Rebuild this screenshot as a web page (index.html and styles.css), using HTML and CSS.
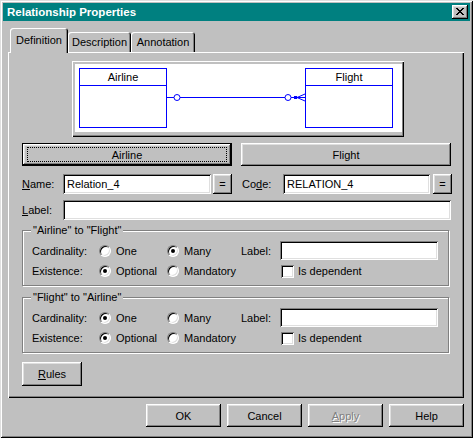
FILE: index.html
```html
<!DOCTYPE html>
<html>
<head>
<meta charset="utf-8">
<title>Relationship Properties</title>
<link rel="stylesheet" href="styles.css">
</head>
<body>
<div class="window">
  <div class="titlebar">
    <span class="title">Relationship Properties</span>
    <span class="close"><svg width="16" height="14" viewBox="0 0 16 14"><path fill="#000" d="M4 3h2v1h-2zM10 3h2v1h-2zM5 4h2v1h-2zM9 4h2v1h-2zM6 5h4v1h-4zM7 6h2v1h-2zM6 7h4v1h-4zM5 8h2v1h-2zM9 8h2v1h-2zM4 9h2v1h-2zM10 9h2v1h-2z"/></svg></span>
  </div>
  <div class="body">
    <div class="tabs">
      <div class="tab active">Definition</div>
      <div class="tab t-desc">Description</div>
      <div class="tab t-ann">Annotation</div>
    </div>
    <div class="panel">
      <div class="diagram">
        <svg class="canvas" width="327" height="68" viewBox="0 0 327 68">
          <g fill="none" stroke="#0000ff" stroke-width="1">
            <rect x="4.5" y="4.5" width="87" height="59" fill="#fff"/>
            <line x1="4.5" y1="21.5" x2="91.5" y2="21.5"/>
            <rect x="230.5" y="4.5" width="87" height="59" fill="#fff"/>
            <line x1="230.5" y1="21.5" x2="317.5" y2="21.5"/>
            <line x1="92" y1="33.5" x2="99" y2="33.5"/>
            <circle cx="102" cy="33.5" r="3" fill="#fff"/>
            <line x1="105" y1="33.5" x2="210" y2="33.5"/>
            <circle cx="213" cy="33.5" r="3" fill="#fff"/>
            <line x1="216" y1="33.5" x2="230" y2="33.5"/>
            <line x1="222" y1="33.5" x2="230" y2="30"/>
            <line x1="222" y1="33.5" x2="230" y2="37"/>
          </g>
          <rect x="219" y="32" width="3" height="3" fill="#0000ff"/>
          <text class="ent" x="48" y="17" text-anchor="middle">Airline</text>
          <text class="ent" x="274" y="17" text-anchor="middle">Flight</text>
        </svg>
      </div>

      <div class="row ends">
        <button class="btn default wide"><span class="focus">Airline</span></button>
        <button class="btn wide">Flight</button>
      </div>

      <div class="row names">
        <span class="lbl"><u>N</u>ame:</span>
        <div class="field f-name">Relation_4</div>
        <button class="btn eq eq1">=</button>
        <span class="lbl lbl-code">Co<u>d</u>e:</span>
        <div class="field f-code">RELATION_4</div>
        <button class="btn eq eq2">=</button>
      </div>

      <div class="row labelrow">
        <span class="lbl"><u>L</u>abel:</span>
        <div class="field f-label"></div>
      </div>

      <div class="group g1">
        <span class="legend">"Airline" to "Flight"</span>
        <div class="grid">
          <span>Cardinality:</span>
          <span class="opt"><span class="radio"></span>One</span>
          <span class="opt"><span class="radio on"></span>Many</span>
          <span>Label:</span>
          <div class="field f-glabel"></div>
          <span>Existence:</span>
          <span class="opt"><span class="radio on"></span>Optional</span>
          <span class="opt"><span class="radio"></span>Mandatory</span>
          <span></span>
          <span class="opt chk"><span class="check"></span>Is dependent</span>
        </div>
      </div>

      <div class="group g2">
        <span class="legend">"Flight" to "Airline"</span>
        <div class="grid">
          <span>Cardinality:</span>
          <span class="opt"><span class="radio on"></span>One</span>
          <span class="opt"><span class="radio"></span>Many</span>
          <span>Label:</span>
          <div class="field f-glabel"></div>
          <span>Existence:</span>
          <span class="opt"><span class="radio on"></span>Optional</span>
          <span class="opt"><span class="radio"></span>Mandatory</span>
          <span></span>
          <span class="opt chk"><span class="check"></span>Is dependent</span>
        </div>
      </div>

      <button class="btn rules"><u>R</u>ules</button>
    </div>

    <div class="actions">
      <button class="btn act">OK</button>
      <button class="btn act">Cancel</button>
      <button class="btn act disabled"><u>A</u>pply</button>
      <button class="btn act">Help</button>
    </div>
  </div>
</div>
</body>
</html>
```

FILE: styles.css
```css
* { box-sizing: border-box; margin: 0; padding: 0; }

html, body {
  width: 473px;
  height: 438px;
  overflow: hidden;
  background: #c0c0c0;
}

body {
  font-family: "Liberation Sans", Arial, sans-serif;
  font-size: 11px;
  color: #000;
}

u { text-decoration: underline; text-underline-offset: 1px; }

.window {
  width: 473px;
  height: 438px;
  padding: 3px;
  background: #c0c0c0;
  box-shadow: inset 1px 1px #dfdfdf, inset -1px -1px #000, inset 2px 2px #fff, inset -2px -2px #808080;
  display: flex;
  flex-direction: column;
}

.titlebar {
  height: 18px;
  background: #008080;
  display: flex;
  align-items: center;
  justify-content: space-between;
  padding: 0 2px 0 4px;
}

.title {
  color: #fff;
  font-weight: bold;
  font-size: 11.5px;
}

.close {
  width: 16px;
  height: 14px;
  background: #c0c0c0;
  box-shadow: inset -1px -1px #000, inset 1px 1px #fff, inset -2px -2px #808080, inset 2px 2px #dfdfdf;
  display: block;
}
.close svg { display: block; }

.body {
  padding: 0 6px 0 5px;
}

.tabs {
  display: flex;
  align-items: flex-start;
  height: 24px;
  margin-top: 7px;
  padding-left: 2px;
}

.tab {
  height: 20px;
  margin-top: 4px;
  line-height: 20px;
  text-align: center;
  background: #c0c0c0;
  border-radius: 3px 3px 0 0;
  box-shadow: inset 1px 1px #fff, inset -1px 0 #000, inset -2px 0 #808080;
}

.tab.active {
  position: relative;
  z-index: 1;
  width: 58px;
  height: 25px;
  margin-top: 0;
  padding-top: 2px;
}

.t-desc { width: 63px; }
.t-ann { width: 64px; }

.panel {
  height: 346px;
  box-shadow: inset 1px 1px #fff, inset -1px -1px #000, inset -2px -2px #808080;
  padding-left: 14px;
  display: flex;
  flex-direction: column;
  align-items: flex-start;
}

.diagram {
  margin-top: 9px;
  margin-left: 50px;
  width: 332px;
  height: 76px;
  padding: 3px 2px 5px 3px;
  box-shadow: inset 1px 1px #fff, inset -1px -1px #000, inset -2px -2px #808080;
}

.canvas {
  display: block;
  background: #fff;
}

.ent {
  font-family: "Liberation Sans", Arial, sans-serif;
  font-size: 11px;
  fill: #000;
}

.row {
  display: flex;
  align-items: center;
}

.btn {
  font: inherit;
  color: #000;
  background: #c0c0c0;
  border: 0;
  box-shadow: inset -1px -1px #000, inset 1px 1px #fff, inset -2px -2px #808080, inset 2px 2px #dfdfdf;
  display: flex;
  align-items: center;
  justify-content: center;
}

.ends {
  margin-top: 6px;
  gap: 9px;
}

.wide {
  width: 210px;
  height: 23px;
}

.btn.default {
  padding: 4px 5px 4px 5px;
  box-shadow: inset 0 0 0 1px #000, inset -2px -2px #000, inset 2px 2px #fff, inset -3px -3px #808080, inset 3px 3px #dfdfdf;
}

.focus {
  width: 100%;
  height: 100%;
  border: 1px dotted #000;
  display: flex;
  align-items: center;
  justify-content: center;
}

.names {
  margin-top: 8px;
  height: 20px;
}

.lbl {
  width: 41px;
}

.lbl-code {
  margin-left: 10px;
}

.field {
  height: 20px;
  background: #fff;
  line-height: 20px;
  padding-left: 4px;
  box-shadow: inset 1px 1px #808080, inset -1px -1px #fff, inset 2px 2px #000, inset -2px -2px #dfdfdf;
}

.f-name { width: 148px; }
.f-code { width: 147px; }
.f-label { width: 388px; }
.f-glabel { width: 158px; height: 19px; }

.eq {
  width: 19px;
  height: 20px;
}
.eq1 { margin-left: 2px; }
.eq2 { margin-left: 3px; }

.labelrow {
  margin-top: 6px;
  height: 20px;
}

.group {
  position: relative;
  width: 427px;
  height: 56px;
  border: 1px solid #808080;
  box-shadow: 1px 1px #fff, inset 1px 1px #fff;
}

.g1 { margin-top: 10px; }
.g2 { margin-top: 11px; }

.legend {
  position: absolute;
  top: -7px;
  left: 8px;
  padding: 0 2px;
  line-height: 13px;
  background: #c0c0c0;
}

.grid {
  display: grid;
  grid-template-columns: 67px 68px 74px 39px 158px;
  grid-template-rows: 19px 22px;
  align-items: center;
  padding: 10px 0 0 9px;
}

.opt {
  display: flex;
  align-items: center;
  gap: 5px;
}

.radio {
  position: relative;
  width: 12px;
  height: 12px;
  border-radius: 50%;
  background: #fff;
  border: 1px solid;
  border-color: #808080 #fff #fff #808080;
  box-shadow: inset 1px 1px #000, inset -1px -1px #dfdfdf;
}

.radio.on::after {
  content: "";
  position: absolute;
  left: 3px;
  top: 3px;
  width: 4px;
  height: 4px;
  border-radius: 50%;
  background: #000;
}

.chk {
  gap: 4px;
  margin-left: 1px;
}

.check {
  width: 13px;
  height: 13px;
  background: #fff;
  box-shadow: inset 1px 1px #808080, inset -1px -1px #fff, inset 2px 2px #000, inset -2px -2px #dfdfdf;
}

.rules {
  margin-top: 9px;
  width: 60px;
  height: 24px;
}

.actions {
  display: flex;
  justify-content: flex-end;
  gap: 6px;
  margin-top: 6px;
}

.act {
  width: 75px;
  height: 23px;
}

.disabled {
  color: #808080;
  text-shadow: 1px 1px #fff;
}
```
